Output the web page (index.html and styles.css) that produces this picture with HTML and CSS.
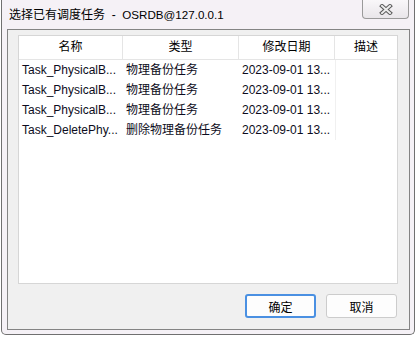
FILE: index.html
```html
<!DOCTYPE html>
<html lang="zh-CN">
<head>
    <meta charset="UTF-8">
    <title>选择已有调度任务</title>
    <link rel="stylesheet" href="styles.css">
</head>
<body>
    <div class="window">
        <div class="titlebar">
            <span class="title">选择已有调度任务&nbsp;&nbsp;-&nbsp;&nbsp;<span class="title-host">OSRDB@127.0.0.1</span></span>
            <div class="close-btn">
                <svg width="14" height="11" viewBox="0 0 14 11">
                    <path d="M3 2 L11 9 M11 2 L3 9" stroke="#5a5a5a" stroke-width="4" stroke-linecap="square"/>
                    <path d="M3 2 L11 9 M11 2 L3 9" stroke="#ececec" stroke-width="2" stroke-linecap="square"/>
                </svg>
            </div>
        </div>

        <div class="client">
            <!-- task list -->
            <div class="list">
                <div class="list-head">
                    <div class="head-cell">名称</div>
                    <div class="head-cell">类型</div>
                    <div class="head-cell">修改日期</div>
                    <div class="head-cell last">描述</div>
                </div>
                <div class="list-row">
                    <div class="cell">Task_PhysicalB...</div>
                    <div class="cell">物理备份任务</div>
                    <div class="cell">2023-09-01 13...</div>
                    <div class="cell desc"></div>
                </div>
                <div class="list-row">
                    <div class="cell">Task_PhysicalB...</div>
                    <div class="cell">物理备份任务</div>
                    <div class="cell">2023-09-01 13...</div>
                    <div class="cell desc"></div>
                </div>
                <div class="list-row">
                    <div class="cell">Task_PhysicalB...</div>
                    <div class="cell">物理备份任务</div>
                    <div class="cell">2023-09-01 13...</div>
                    <div class="cell desc"></div>
                </div>
                <div class="list-row">
                    <div class="cell">Task_DeletePhy...</div>
                    <div class="cell">删除物理备份任务</div>
                    <div class="cell">2023-09-01 13...</div>
                    <div class="cell desc"></div>
                </div>
            </div>

            <div class="buttons">
                <button class="btn default">确定</button>
                <button class="btn">取消</button>
            </div>
        </div>
    </div>
</body>
</html>
```

FILE: styles.css
```css
body {
    margin: 0;
    width: 416px;
    height: 337px;
    background: #ffffff;
    font-family: "Liberation Sans", "Noto Sans CJK SC", sans-serif;
    font-size: 12px;
    color: #000;
}
.window {
    margin-left: 1px;
    width: 412px;
    height: 334px;
    background: #f5f1f6;
    border: 1px solid #707070;
    border-top: none;
    border-radius: 0 0 5px 5px;
    display: flex;
    flex-direction: column;
}
.titlebar {
    height: 29px;
    display: flex;
    align-items: flex-start;
    justify-content: space-between;
}
.title {
    margin: 6px 0 0 7px;
    font-size: 12px;
    line-height: 18px;
    color: #000;
}
.title-host {
    font-size: 11.6px;
}
.close-btn {
    width: 45px;
    height: 18px;
    margin-right: 5px;
    border: 1px solid #9a9a9a;
    border-top: none;
    border-radius: 0 0 4px 4px;
    background: linear-gradient(#f9f7f9, #e9e6ea);
    display: flex;
    align-items: center;
    justify-content: center;
}
.client {
    margin: 0 4px 4px 5px;
    flex: 1;
    background: #f0f0f0;
    border: 1px solid #848484;
    padding: 5px 11px 10px 10px;
    display: flex;
    flex-direction: column;
}
.list {
    height: 247px;
    background: #fff;
    border: 1px solid #d6d6d6;
}
.list-head,
.list-row {
    display: grid;
    grid-template-columns: 104px 116px 96px 62px;
}
.head-cell {
    height: 23px;
    line-height: 23px;
    text-align: center;
    border-right: 1px solid #e5e5e5;
    border-bottom: 1px solid #e5e5e5;
}
.head-cell.last {
    border-right: none;
}
.list-row {
    height: 20px;
}
.cell {
    padding-left: 3px;
    line-height: 20px;
    white-space: nowrap;
    overflow: hidden;
    color: #0c0c20;
}
.cell.desc {
    border-left: 1px solid #f0f0f0;
}
.buttons {
    margin-top: 10px;
    margin-right: 1px;
    display: flex;
    justify-content: flex-end;
    gap: 10px;
}
.btn {
    width: 71px;
    height: 24px;
    padding: 0;
    font-family: "Noto Sans CJK SC", sans-serif;
    font-size: 12px;
    color: #000;
    background: #fdfdfd;
    border: 1px solid #cccccc;
    border-radius: 3px;
}
.btn.default {
    border: 2px solid #4a90e2;
}
```
